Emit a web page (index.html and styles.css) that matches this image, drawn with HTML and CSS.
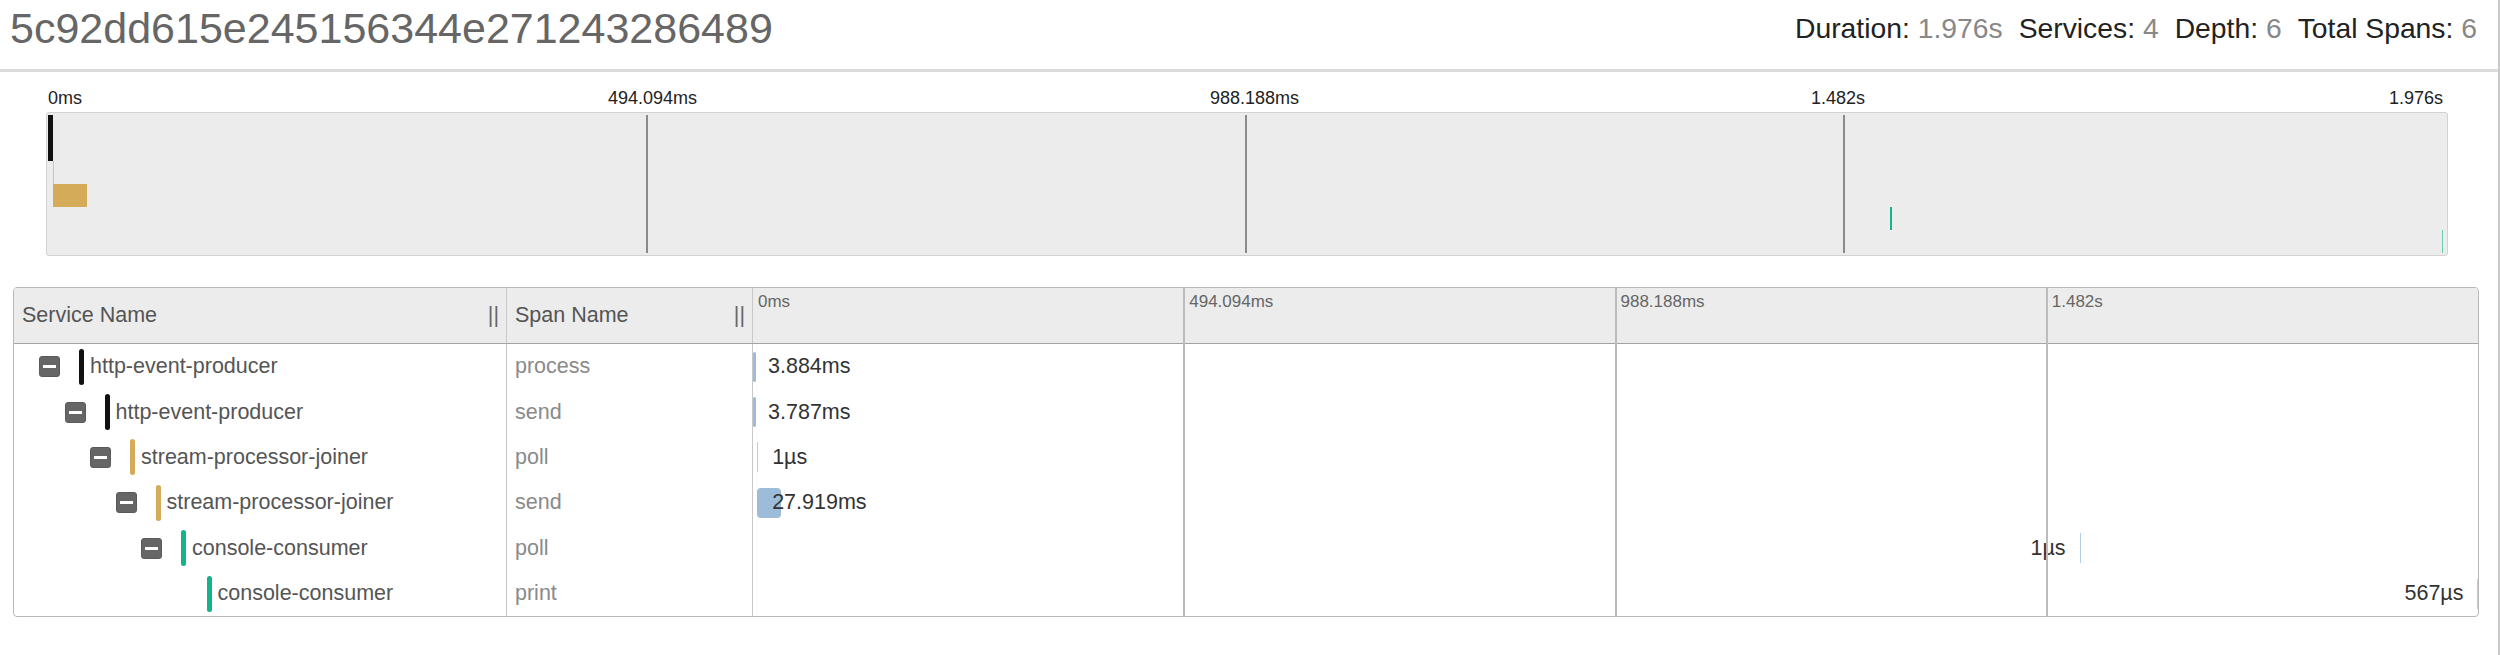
FILE: index.html
```html
<!DOCTYPE html>
<html lang="en">
<head>
<meta charset="utf-8">
<title>Trace 5c92dd615e245156344e271243286489</title>
<link rel="stylesheet" href="styles.css">
</head>
<body>
<div class="page">
  <header class="trace-header">
    <h1 class="trace-id">5c92dd615e245156344e271243286489</h1>
    <ul class="trace-stats">
      <li><span class="stat-label">Duration:</span> <span class="stat-value">1.976s</span></li>
      <li><span class="stat-label">Services:</span> <span class="stat-value">4</span></li>
      <li><span class="stat-label">Depth:</span> <span class="stat-value">6</span></li>
      <li><span class="stat-label">Total Spans:</span> <span class="stat-value">6</span></li>
    </ul>
  </header>

  <section class="minimap">
    <div class="minimap-ticks">
      <span class="mm-label" style="left:0">0ms</span>
      <span class="mm-label" style="left:560px">494.094ms</span>
      <span class="mm-label" style="left:1162px">988.188ms</span>
      <span class="mm-label" style="left:1763px">1.482s</span>
      <span class="mm-label mm-label-end">1.976s</span>
    </div>
    <div class="minimap-box">
      <div class="minimap-canvas">
        <div class="mm-row"><div class="mm-bar svc-http" style="margin-left:0%;width:0.197%"></div></div>
        <div class="mm-row"><div class="mm-bar svc-http" style="margin-left:0%;width:0.192%"></div></div>
        <div class="mm-row"><div class="mm-bar svc-stream mm-faint" style="margin-left:0.228%;width:0.01%"></div></div>
        <div class="mm-row"><div class="mm-bar svc-stream" style="margin-left:0.228%;width:1.413%"></div></div>
        <div class="mm-row"><div class="mm-bar svc-console" style="margin-left:76.9%;width:0.084%"></div></div>
        <div class="mm-row"><div class="mm-bar svc-console mm-faint" style="margin-left:99.94%;width:0.029%"></div></div>
        <span class="mm-tick" style="left:25%"></span>
        <span class="mm-tick" style="left:50%"></span>
        <span class="mm-tick" style="left:75%"></span>
      </div>
    </div>
  </section>

  <section class="trace-table">
    <div class="tt-head">
      <div class="th th-service"><span>Service Name</span><span class="grip">||</span></div>
      <div class="th th-span"><span>Span Name</span><span class="grip">||</span></div>
      <div class="th th-timeline">
        <span class="tl-label" style="left:5px">0ms</span>
        <span class="tl-label" style="left:calc(25% + 5px)">494.094ms</span>
        <span class="tl-label" style="left:calc(50% + 5px)">988.188ms</span>
        <span class="tl-label" style="left:calc(75% + 5px)">1.482s</span>
      </div>
    </div>

    <div class="tt-body">
      <div class="tt-row">
        <div class="td td-service depth-0"><span class="toggle"></span><span class="svc-mark svc-http"></span><span class="svc-name">http-event-producer</span></div>
        <div class="td td-span">process</div>
        <div class="td td-timeline">
          <span class="span-bar" style="left:0%;width:0.197%"></span>
          <span class="span-label" style="left:calc(0% + 15px)">3.884ms</span>
        </div>
      </div>
      <div class="tt-row">
        <div class="td td-service depth-1"><span class="toggle"></span><span class="svc-mark svc-http"></span><span class="svc-name">http-event-producer</span></div>
        <div class="td td-span">send</div>
        <div class="td td-timeline">
          <span class="span-bar" style="left:0.003%;width:0.192%"></span>
          <span class="span-label" style="left:calc(0.003% + 15px)">3.787ms</span>
        </div>
      </div>
      <div class="tt-row">
        <div class="td td-service depth-2"><span class="toggle"></span><span class="svc-mark svc-stream"></span><span class="svc-name">stream-processor-joiner</span></div>
        <div class="td td-span">poll</div>
        <div class="td td-timeline">
          <span class="span-bar span-bar-thin" style="left:0.24%;width:0.0001%"></span>
          <span class="span-label" style="left:calc(0.24% + 15px)">1µs</span>
        </div>
      </div>
      <div class="tt-row">
        <div class="td td-service depth-3"><span class="toggle"></span><span class="svc-mark svc-stream"></span><span class="svc-name">stream-processor-joiner</span></div>
        <div class="td td-span">send</div>
        <div class="td td-timeline">
          <span class="span-bar" style="left:0.24%;width:1.413%"></span>
          <span class="span-label" style="left:calc(0.24% + 15px)">27.919ms</span>
        </div>
      </div>
      <div class="tt-row">
        <div class="td td-service depth-4"><span class="toggle"></span><span class="svc-mark svc-console"></span><span class="svc-name">console-consumer</span></div>
        <div class="td td-span">poll</div>
        <div class="td td-timeline">
          <span class="span-bar span-bar-thin" style="left:76.9%;width:0.0001%"></span>
          <span class="span-label" style="right:calc(23.1% + 14px)">1µs</span>
        </div>
      </div>
      <div class="tt-row">
        <div class="td td-service depth-5"><span class="toggle toggle-leaf"></span><span class="svc-mark svc-console"></span><span class="svc-name">console-consumer</span></div>
        <div class="td td-span">print</div>
        <div class="td td-timeline">
          <span class="span-bar span-bar-thin" style="left:99.971%;width:0.029%"></span>
          <span class="span-label" style="right:calc(0.029% + 14px)">567µs</span>
        </div>
      </div>
    </div>

    <div class="tt-ticks">
      <span class="tt-tick" style="left:25%"></span>
      <span class="tt-tick" style="left:50%"></span>
      <span class="tt-tick" style="left:75%"></span>
    </div>
  </section>
</div>
</body>
</html>
```

FILE: styles.css
```css
* {
  box-sizing: border-box;
}

html,
body {
  margin: 0;
  padding: 0;
  background: #fff;
}

body {
  font-family: "Liberation Sans", Arial, sans-serif;
  color: #222;
}

.page {
  width: 2500px;
  min-height: 655px;
  border-right: 2px solid #cacaca;
}

/* ---------- header ---------- */
.trace-header {
  display: flex;
  align-items: center;
  justify-content: space-between;
  height: 72px;
  padding: 0 21px 12px 10px;
  border-bottom: 3px solid #dcdcdc;
}

.trace-id {
  margin: 0;
  font-size: 43px;
  font-weight: normal;
  color: #666;
  line-height: 1.15;
}

.trace-stats {
  display: flex;
  gap: 16px;
  margin: 0;
  padding: 0;
  list-style: none;
  font-size: 28.3px;
  line-height: 1.15;
}

.stat-label {
  color: #222;
}

.stat-value {
  color: #888;
}

/* ---------- minimap ---------- */
.minimap {
  margin: 16px 50px 0 46px;
}

.minimap-ticks {
  position: relative;
  height: 24px;
  margin: 0 5px 0 2px;
  font-size: 18px;
  color: #222;
}

.mm-label {
  position: absolute;
  top: 0;
  white-space: nowrap;
}

.mm-label-end {
  right: 0;
}

.minimap-box {
  border: 1px solid #d2d2d2;
  border-radius: 3px;
  background: #ececec;
  padding: 2px 4px 2px 1px;
}

.minimap-canvas {
  position: relative;
}

.mm-row {
  height: 23px;
}

.mm-bar {
  height: 100%;
  min-width: 1px;
}

.mm-faint {
  opacity: 0.6;
}

.mm-tick {
  position: absolute;
  top: 0;
  bottom: 0;
  width: 2px;
  margin-left: -1px;
  background: #8a8a8a;
}

.svc-http {
  background: #111;
}

.svc-stream {
  background: #d3ab59;
}

.svc-console {
  background: #14b38a;
}

/* ---------- trace table ---------- */
.trace-table {
  position: relative;
  margin: 31px 19px 0 13px;
  border: 1px solid #b9b9b9;
  border-radius: 4px;
  overflow: hidden;
}

.tt-head,
.tt-row {
  display: grid;
  grid-template-columns: 493px 246px 1fr;
}

.tt-head {
  height: 56px;
  background: #ececec;
  border-bottom: 1px solid #a4a4a4;
}

.th {
  display: flex;
  align-items: center;
  justify-content: space-between;
  padding: 0 7px 0 8px;
  font-size: 21.5px;
  color: #555;
  border-right: 1px solid #c8c8c8;
}

.grip {
  color: #666;
}

.th-timeline {
  position: relative;
  border-right: none;
  padding: 0;
}

.tl-label {
  position: absolute;
  top: 4px;
  font-size: 17px;
  color: #666;
  white-space: nowrap;
}

.tt-row {
  height: 45.4px;
}

.td {
  display: flex;
  align-items: center;
  font-size: 21.5px;
  border-right: 1px solid #c8c8c8;
  white-space: nowrap;
}

.td-service {
  color: #555;
}

.depth-0 { padding-left: 25px; }
.depth-1 { padding-left: 50.5px; }
.depth-2 { padding-left: 76px; }
.depth-3 { padding-left: 101.5px; }
.depth-4 { padding-left: 127px; }
.depth-5 { padding-left: 152.5px; }

.toggle {
  position: relative;
  flex: none;
  width: 21px;
  height: 21px;
  margin-right: 19px;
  border-radius: 3px;
  background: #666;
  border: 1px solid #5a5a5a;
}

.toggle::after {
  content: "";
  position: absolute;
  left: 3px;
  right: 3px;
  top: 8px;
  height: 3px;
  background: #fff;
}

.toggle-leaf {
  visibility: hidden;
}

.svc-mark {
  flex: none;
  width: 5px;
  height: 36px;
  margin-right: 6px;
  border-radius: 3px;
}

.td-span {
  padding-left: 8px;
  color: #8a8a8a;
}

.td-timeline {
  position: relative;
  border-right: none;
}

.span-bar {
  position: absolute;
  top: 7.7px;
  height: 30px;
  min-width: 1px;
  border-radius: 4px;
  background: #9cbcda;
}

.span-bar-thin {
  border-radius: 0;
  background: #b6cde3;
}

.span-label {
  position: absolute;
  top: 0;
  bottom: 0;
  display: flex;
  align-items: center;
  color: #333;
}

.tt-ticks {
  position: absolute;
  top: 0;
  bottom: 0;
  left: 739px;
  right: 0;
  pointer-events: none;
}

.tt-tick {
  position: absolute;
  top: 0;
  bottom: 0;
  width: 2px;
  margin-left: -1px;
  background: #bcbcbc;
}
```
